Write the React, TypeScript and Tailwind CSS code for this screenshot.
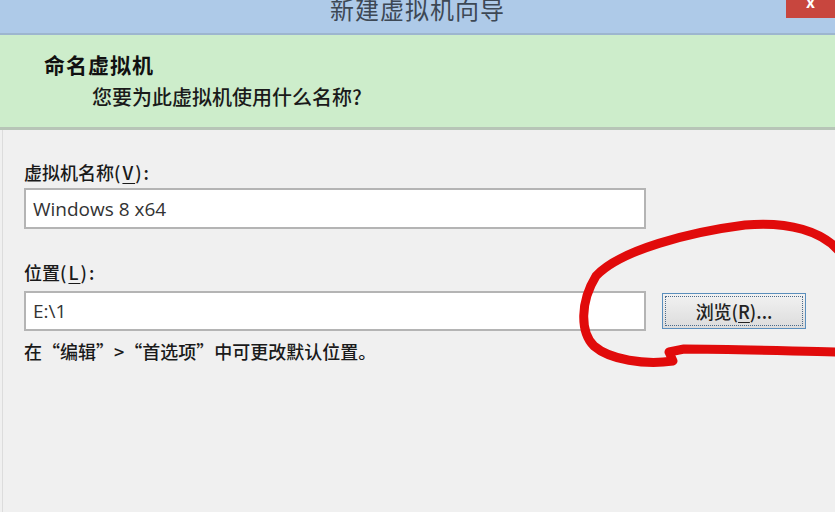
import React from "react";

const cjk = "font-['Microsoft_YaHei','Noto_Sans_CJK_SC',sans-serif]";

const Key = ({ k }: { k: string }) => (
  <span className="tracking-[2px]">
    (<span className="underline underline-offset-[3px]">{k}</span>):
  </span>
);

const App = () => {
  return (
    <div className={`relative w-[835px] h-[512px] overflow-hidden bg-[#f0f0f0] ${cjk}`}>
      {/* title bar */}
      <div className="h-[35px] bg-[#aecae8] border-b-2 border-[#9db6cf] flex justify-center overflow-hidden">
        <div className="-mt-[6px] text-[24px] leading-[30px] tracking-[1px] text-[#3d4855]">
          新建虚拟机向导
        </div>
      </div>
      <div className="absolute right-0 top-0 w-[49px] h-[18px] bg-[#c8463e] flex justify-center overflow-hidden">
        <span className="-mt-[9px] text-white text-[16px] leading-[20px] font-bold">x</span>
      </div>

      {/* green header */}
      <div className="h-[95px] bg-[#cdedcb] border-b-[3px] border-[#b7c5b7] pt-[16px]">
        <div className="pl-[44px] text-[21px] leading-[26px] font-bold tracking-[1px] text-[#111]">
          命名虚拟机
        </div>
        <div className="pl-[92px] mt-[7px] text-[20px] leading-[26px] font-medium text-[#1a1a1a]">
          您要为此虚拟机使用什么名称?
        </div>
      </div>

      {/* body */}
      <div className="h-full ml-[2px] border-l border-[#dcdcdc] pl-[21px] pt-[30px] text-[18px] leading-[24px] font-medium text-[#1a1a1a]">
        <div>
          虚拟机名称<Key k="V" />
        </div>
        <div className="mt-[4px] w-[622px] h-[41px] bg-white border-2 border-[#b4b4b4] flex items-center pl-[7px] font-['Open_Sans',sans-serif] font-normal text-[19px] text-[#333]">
          Windows 8 x64
        </div>

        <div className="mt-[31px]">
          位置<Key k="L" />
        </div>
        <div className="mt-[7px] flex items-center">
          <div className="w-[622px] h-[40px] bg-white border-2 border-[#b4b4b4] flex items-center pl-[7px] font-['Open_Sans',sans-serif] font-normal text-[19px] text-[#333]">
            E:\1
          </div>
          <div className="ml-[16px] w-[144px] h-[36px] border border-[#5b8fbd] bg-gradient-to-b from-[#f2f2f2] to-[#dcdcdc] p-[2px]">
            <div className="h-full border border-dotted border-[#4a6a8a] flex items-center justify-center text-[18px] text-[#222]">
              浏览(<span className="underline underline-offset-[3px]">R</span>)...
            </div>
          </div>
        </div>

        <div className="mt-[8px]">在“编辑”&gt;“首选项”中可更改默认位置。</div>
      </div>

      {/* red hand-drawn annotation */}
      <svg className="absolute left-0 top-0 pointer-events-none" width="835" height="512" viewBox="0 0 835 512">
        <path
          d="M 838 352 C 790 351 730 349 684 349 L 669 352 L 673 361 C 645 365 610 360 594 346 C 580 332 580 302 596 276 C 620 250 690 232 745 225 C 790 221 822 232 838 250"
          fill="none"
          stroke="#e10b0b"
          strokeWidth="9"
          strokeLinecap="round"
          strokeLinejoin="round"
        />
      </svg>
    </div>
  );
};

export default App;
